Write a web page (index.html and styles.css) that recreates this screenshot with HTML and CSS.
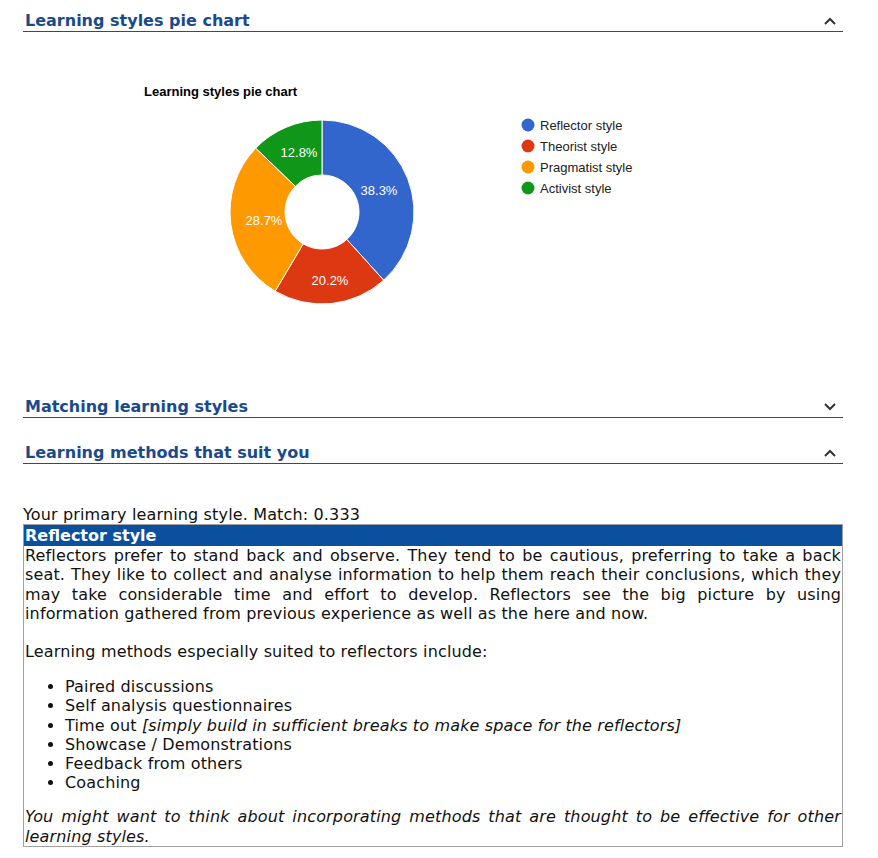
FILE: index.html
```html
<!DOCTYPE html>
<html lang="en">
<head>
<meta charset="utf-8">
<title>Learning styles</title>
<link rel="stylesheet" href="styles.css">
</head>
<body>
<div class="page">
  <div class="section-head">
    <h2 class="section-title">Learning styles pie chart</h2>
    <svg class="chev" width="12" height="8" viewBox="0 0 12 8"><path d="M1 7 L6 2 L11 7" fill="none" stroke="#333" stroke-width="2"/></svg>
  </div>
  <div class="chart">
    <svg width="820" height="365" viewBox="0 0 820 365">
      <text x="121" y="64" class="chart-title">Learning styles pie chart</text>
      <g stroke="#fff" stroke-width="1">
        <path fill="#3366cc" d="M299,88 A92,92 0 0 1 360.70,248.24 L323.82,207.44 A37,37 0 0 0 299,143 Z"/>
        <path fill="#dc3912" d="M360.70,248.24 A92,92 0 0 1 252.17,259.18 L280.17,211.85 A37,37 0 0 0 323.82,207.44 Z"/>
        <path fill="#ff9900" d="M252.17,259.18 A92,92 0 0 1 232.76,116.15 L272.36,154.32 A37,37 0 0 0 280.17,211.85 Z"/>
        <path fill="#109618" d="M232.76,116.15 A92,92 0 0 1 299,88 L299,143 A37,37 0 0 0 272.36,154.32 Z"/>
      </g>
      <g class="slice-label" text-anchor="middle">
        <text x="356" y="163">38.3%</text>
        <text x="307" y="253">20.2%</text>
        <text x="241" y="193">28.7%</text>
        <text x="276" y="125">12.8%</text>
      </g>
      <g class="legend">
        <circle cx="505" cy="93" r="6.5" fill="#3366cc"/>
        <text x="517" y="97.5">Reflector style</text>
        <circle cx="505" cy="114" r="6.5" fill="#dc3912"/>
        <text x="517" y="118.5">Theorist style</text>
        <circle cx="505" cy="135" r="6.5" fill="#ff9900"/>
        <text x="517" y="139.5">Pragmatist style</text>
        <circle cx="505" cy="156" r="6.5" fill="#109618"/>
        <text x="517" y="160.5">Activist style</text>
      </g>
    </svg>
  </div>
  <div class="section-head">
    <h2 class="section-title">Matching learning styles</h2>
    <svg class="chev" width="12" height="8" viewBox="0 0 12 8"><path d="M1 1 L6 6 L11 1" fill="none" stroke="#333" stroke-width="2"/></svg>
  </div>
  <div class="section-head gap-top">
    <h2 class="section-title">Learning methods that suit you</h2>
    <svg class="chev" width="12" height="8" viewBox="0 0 12 8"><path d="M1 7 L6 2 L11 7" fill="none" stroke="#333" stroke-width="2"/></svg>
  </div>
  <div class="methods">
    <div class="primary">Your primary learning style. Match: 0.333</div>
    <div class="style-box">
      <div class="style-head">Reflector style</div>
      <div class="style-body">
        <p>Reflectors prefer to stand back and observe. They tend to be cautious, preferring to take a back seat. They like to collect and analyse information to help them reach their conclusions, which they may take considerable time and effort to develop. Reflectors see the big picture by using information gathered from previous experience as well as the here and now.</p>
        <p class="lead">Learning methods especially suited to reflectors include:</p>
        <ul>
          <li>Paired discussions</li>
          <li>Self analysis questionnaires</li>
          <li>Time out <em>[simply build in sufficient breaks to make space for the reflectors]</em></li>
          <li>Showcase / Demonstrations</li>
          <li>Feedback from others</li>
          <li>Coaching</li>
        </ul>
        <p class="note"><em>You might want to think about incorporating methods that are thought to be effective for other learning styles.</em></p>
      </div>
    </div>
  </div>
</div>
</body>
</html>
```

FILE: styles.css
```css
html, body {
  margin: 0;
  padding: 0;
  background: #fff;
}
body {
  font-family: "DejaVu Sans", Verdana, sans-serif;
  color: #111;
}
.page {
  width: 820px;
  margin-left: 23px;
  padding-top: 11px;
}
.section-head {
  display: flex;
  align-items: center;
  justify-content: space-between;
  height: 20px;
  border-bottom: 1px solid #1d4f8a;
}
.gap-top {
  margin-top: 25px;
}
.section-title {
  margin: 0;
  padding-left: 2px;
  font-size: 16px;
  line-height: 20px;
  font-weight: bold;
  color: #1a4a8c;
}
.chev {
  margin-right: 7px;
  display: block;
}
.chart {
  height: 365px;
}
.chart svg {
  display: block;
}
.chart-title {
  font-family: "Liberation Sans", Arial, sans-serif;
  font-size: 13px;
  font-weight: bold;
  fill: #000;
}
.slice-label text {
  font-family: "Liberation Sans", Arial, sans-serif;
  font-size: 13px;
  fill: #fff;
}
.legend text {
  font-family: "Liberation Sans", Arial, sans-serif;
  font-size: 13px;
  fill: #222;
}
.methods {
  margin-top: 41px;
  font-size: 16px;
  line-height: 19.2px;
  letter-spacing: 0.15px;
}
.style-box {
  border: 1px solid #a0a0a0;
}
.style-head {
  background: #0b4f9f;
  color: #fff;
  font-weight: bold;
  padding-left: 1px;
  height: 21px;
  line-height: 21px;
  letter-spacing: 0;
}
.style-body {
  padding: 0 1px 0 1px;
  text-align: justify;
}
.style-body p {
  margin: 0 0 19px 0;
}
.style-body p.lead {
  margin-bottom: 16px;
}
.style-body ul {
  margin: 16px 0 15px 0;
  padding-left: 40px;
  text-align: left;
}
.style-body .note {
  margin: 0;
}
```
